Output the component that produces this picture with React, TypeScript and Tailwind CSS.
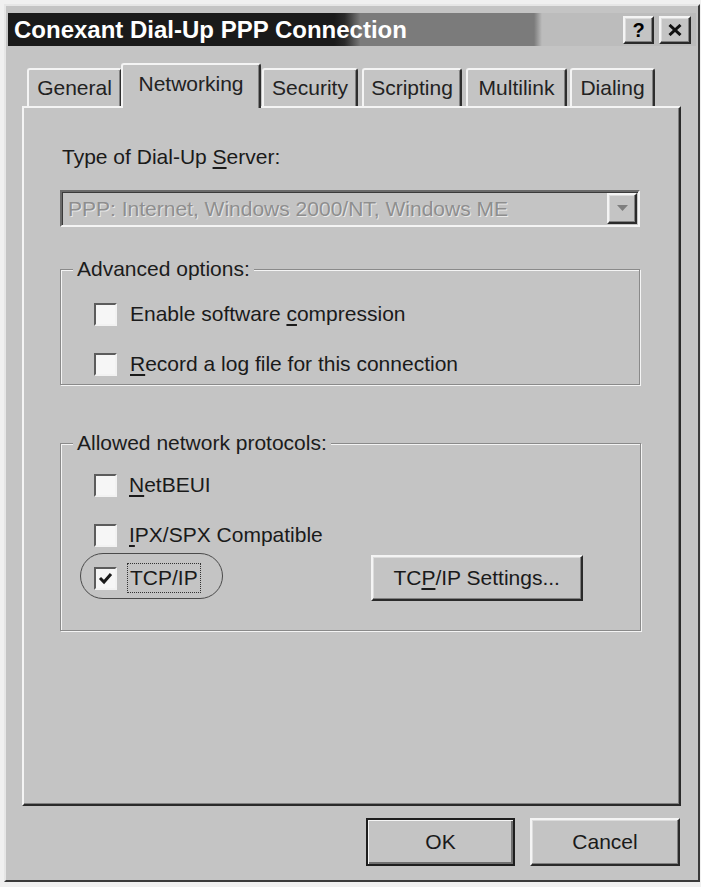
import React from "react";

const raised =
  "border-2 border-t-[#f4f4f4] border-l-[#f4f4f4] border-r-[#2a2a2a] border-b-[#2a2a2a] shadow-[inset_-1px_-1px_0_#808080,inset_1px_1px_0_#dcdcdc]";

function CheckBox({ checked }: { checked?: boolean }) {
  return (
    <div className="w-[23px] h-[23px] shrink-0 border-2 border-t-[#5c5c5c] border-l-[#5c5c5c] border-b-[#f2f2f2] border-r-[#f2f2f2] bg-[#f6f6f6] flex items-center justify-center">
      {checked && (
        <svg width="15" height="13" viewBox="0 0 15 13">
          <path d="M2 6 L6 10 L13 2" fill="none" stroke="#1a1a1a" strokeWidth="3" />
        </svg>
      )}
    </div>
  );
}

function Group({
  legend,
  className,
  children,
}: {
  legend: string;
  className: string;
  children: React.ReactNode;
}) {
  return (
    <div
      className={
        "relative border border-[#8a8a8a] shadow-[1px_1px_0_#f4f4f4,inset_1px_1px_0_#f4f4f4] " +
        className
      }
    >
      <div className="absolute -top-[13px] left-[12px] bg-[#c4c4c4] px-[4px] leading-[24px] text-[21px] text-[#1c1c1c]">
        {legend}
      </div>
      {children}
    </div>
  );
}

export default function App() {
  return (
    <div className="w-[701px] h-[887px] bg-[#f0f0f0] pt-[4px] pl-[4px] font-['Liberation_Sans',Arial,sans-serif] text-[#1a1a1a]">
      <div className="w-[696px] h-[878px] bg-[#c4c4c4] border-2 border-t-[#e6e6e6] border-l-[#e6e6e6] border-r-[#3a3a3a] border-b-[#3a3a3a] pt-[7px] px-[2px] flex flex-col">
        {/* Title bar */}
        <div className="h-[33px] flex bg-[#bcbcbc]">
          <div className="w-[526px] h-full flex items-center pl-[6px] bg-linear-to-r from-[#1a1a1a] from-[62%] via-[#2a2a2a] via-[64%] to-[#7b7b7b] to-[67%]">
            <span className="text-[24px] font-bold text-white leading-none whitespace-nowrap">
              Conexant Dial-Up PPP Connection
            </span>
          </div>
          <div className="w-[8px] h-full bg-linear-to-r from-[#7b7b7b] to-[#bcbcbc]" />
          <div className="flex-1 flex items-center justify-end gap-[5px] pr-[5px]">
            <div className={"w-[31px] h-[28px] bg-[#c4c4c4] flex items-center justify-center text-[20px] font-bold leading-none text-black " + raised}>
              ?
            </div>
            <div className={"w-[32px] h-[28px] bg-[#c4c4c4] flex items-center justify-center " + raised}>
              <svg width="14" height="12" viewBox="0 0 14 12">
                <path d="M1.5 1 L12.5 11 M12.5 1 L1.5 11" stroke="#111" strokeWidth="3" />
              </svg>
            </div>
          </div>
        </div>

        {/* Tabs + panel */}
        <div className="mt-[17px] pl-[14px] flex flex-col">
          <div className="h-[43px] flex items-end">
            <div className="ml-[5px] w-[95px] h-[38px] rounded-t-[3px] border-t-2 border-l-2 border-r-2 border-t-[#f4f4f4] border-l-[#f4f4f4] border-r-[#2e2e2e] shadow-[inset_-1px_0_0_#808080] flex items-center justify-center text-[21px] text-[#222]">
              General
            </div>
            <div className="relative z-10 -mb-[2px] w-[140px] h-[45px] -mx-[1px] rounded-t-[3px] bg-[#c4c4c4] border-t-2 border-l-2 border-r-2 border-t-[#f4f4f4] border-l-[#f4f4f4] border-r-[#2e2e2e] shadow-[inset_-1px_0_0_#808080] flex items-center justify-center pb-[5px] text-[21px] text-[#222]">
              Networking
            </div>
            <div className="ml-[2px] w-[96px] h-[38px] rounded-t-[3px] border-t-2 border-l-2 border-r-2 border-t-[#f4f4f4] border-l-[#f4f4f4] border-r-[#2e2e2e] shadow-[inset_-1px_0_0_#808080] flex items-center justify-center text-[21px] text-[#222]">
              Security
            </div>
            <div className="ml-[4px] w-[100px] h-[38px] rounded-t-[3px] border-t-2 border-l-2 border-r-2 border-t-[#f4f4f4] border-l-[#f4f4f4] border-r-[#2e2e2e] shadow-[inset_-1px_0_0_#808080] flex items-center justify-center text-[21px] text-[#222]">
              Scripting
            </div>
            <div className="ml-[4px] w-[101px] h-[38px] rounded-t-[3px] border-t-2 border-l-2 border-r-2 border-t-[#f4f4f4] border-l-[#f4f4f4] border-r-[#2e2e2e] shadow-[inset_-1px_0_0_#808080] flex items-center justify-center text-[21px] text-[#222]">
              Multilink
            </div>
            <div className="ml-[3px] w-[85px] h-[38px] rounded-t-[3px] border-t-2 border-l-2 border-r-2 border-t-[#f4f4f4] border-l-[#f4f4f4] border-r-[#2e2e2e] shadow-[inset_-1px_0_0_#808080] flex items-center justify-center text-[21px] text-[#222]">
              Dialing
            </div>
          </div>

          <div className="w-[659px] h-[700px] border-2 border-t-[#f4f4f4] border-l-[#f4f4f4] border-r-[#2a2a2a] border-b-[#2a2a2a] shadow-[inset_-1px_-1px_0_#808080] pt-[37px] pl-[36px] flex flex-col">
            <div className="ml-[2px] text-[21px] leading-[24px]">
              Type of Dial-Up <u className="underline-offset-[3px]">S</u>erver:
            </div>

            {/* Combo box (disabled) */}
            <div className="mt-[21px] w-[580px] h-[37px] border-2 border-t-[#6a6a6a] border-l-[#6a6a6a] border-r-[#f4f4f4] border-b-[#f4f4f4] shadow-[inset_1px_1px_0_#3a3a3a] flex items-center pl-[6px] pr-[1px]">
              <span className="text-[21px] text-[#8e8e8e] [text-shadow:1px_1px_0_#e8e8e8] leading-none">
                PPP: Internet, Windows 2000/NT, Windows ME
              </span>
              <div className={"ml-auto w-[30px] h-[31px] bg-[#c4c4c4] flex items-center justify-center " + raised}>
                <svg width="11" height="7" viewBox="0 0 11 7">
                  <path d="M0 0 H11 L5.5 6 Z" fill="#7e7e7e" />
                </svg>
              </div>
            </div>

            <Group legend="Advanced options:" className="mt-[42px] w-[580px] h-[116px] pt-[32px] pl-[33px]">
              <div className="h-[24px] flex items-center">
                <CheckBox />
                <span className="ml-[13px] text-[21px] leading-[24px]">
                  Enable software <u className="underline-offset-[3px]">c</u>ompression
                </span>
              </div>
              <div className="mt-[26px] h-[24px] flex items-center">
                <CheckBox />
                <span className="ml-[13px] text-[21px] leading-[24px]">
                  <u className="underline-offset-[3px]">R</u>ecord a log file for this connection
                </span>
              </div>
            </Group>

            <Group legend="Allowed network protocols:" className="mt-[58px] w-[581px] h-[188px] pt-[29px] pl-[33px]">
              <div className="h-[24px] flex items-center">
                <CheckBox />
                <span className="ml-[12px] text-[21px] leading-[24px]">
                  <u className="underline-offset-[3px]">N</u>etBEUI
                </span>
              </div>
              <div className="mt-[26px] h-[24px] flex items-center">
                <CheckBox />
                <span className="ml-[12px] text-[21px] leading-[24px]">
                  <u className="underline-offset-[3px]">I</u>PX/SPX Compatible
                </span>
              </div>
              <div className="mt-[8px] h-[46px] flex items-center">
                <div className="relative flex items-center">
                  <div className="absolute -left-[14px] -top-[10px] w-[143px] h-[46px] rounded-full border border-[#4a4a4a]" />
                  <CheckBox checked />
                  <span className="ml-[10px] px-[2px] border border-dotted border-[#333] text-[21px] leading-[28px]">
                    TCP/IP
                  </span>
                </div>
                <div className={"ml-[170px] w-[212px] h-[46px] bg-[#c4c4c4] flex items-center justify-center text-[21px] " + raised}>
                  <span>
                    TC<u className="underline-offset-[3px]">P</u>/IP Settings...
                  </span>
                </div>
              </div>
            </Group>
          </div>

          {/* Dialog buttons */}
          <div className="mt-[12px] w-[659px] flex justify-end gap-[15px] pr-[1px]">
            <div className="w-[149px] h-[48px] bg-[#c4c4c4] border-2 border-[#1e1e1e] shadow-[inset_1px_1px_0_#f4f4f4,inset_-2px_-2px_0_#707070] flex items-center justify-center text-[21px]">
              OK
            </div>
            <div className={"w-[150px] h-[48px] bg-[#c4c4c4] flex items-center justify-center text-[21px] " + raised}>
              Cancel
            </div>
          </div>
        </div>
      </div>
    </div>
  );
}
